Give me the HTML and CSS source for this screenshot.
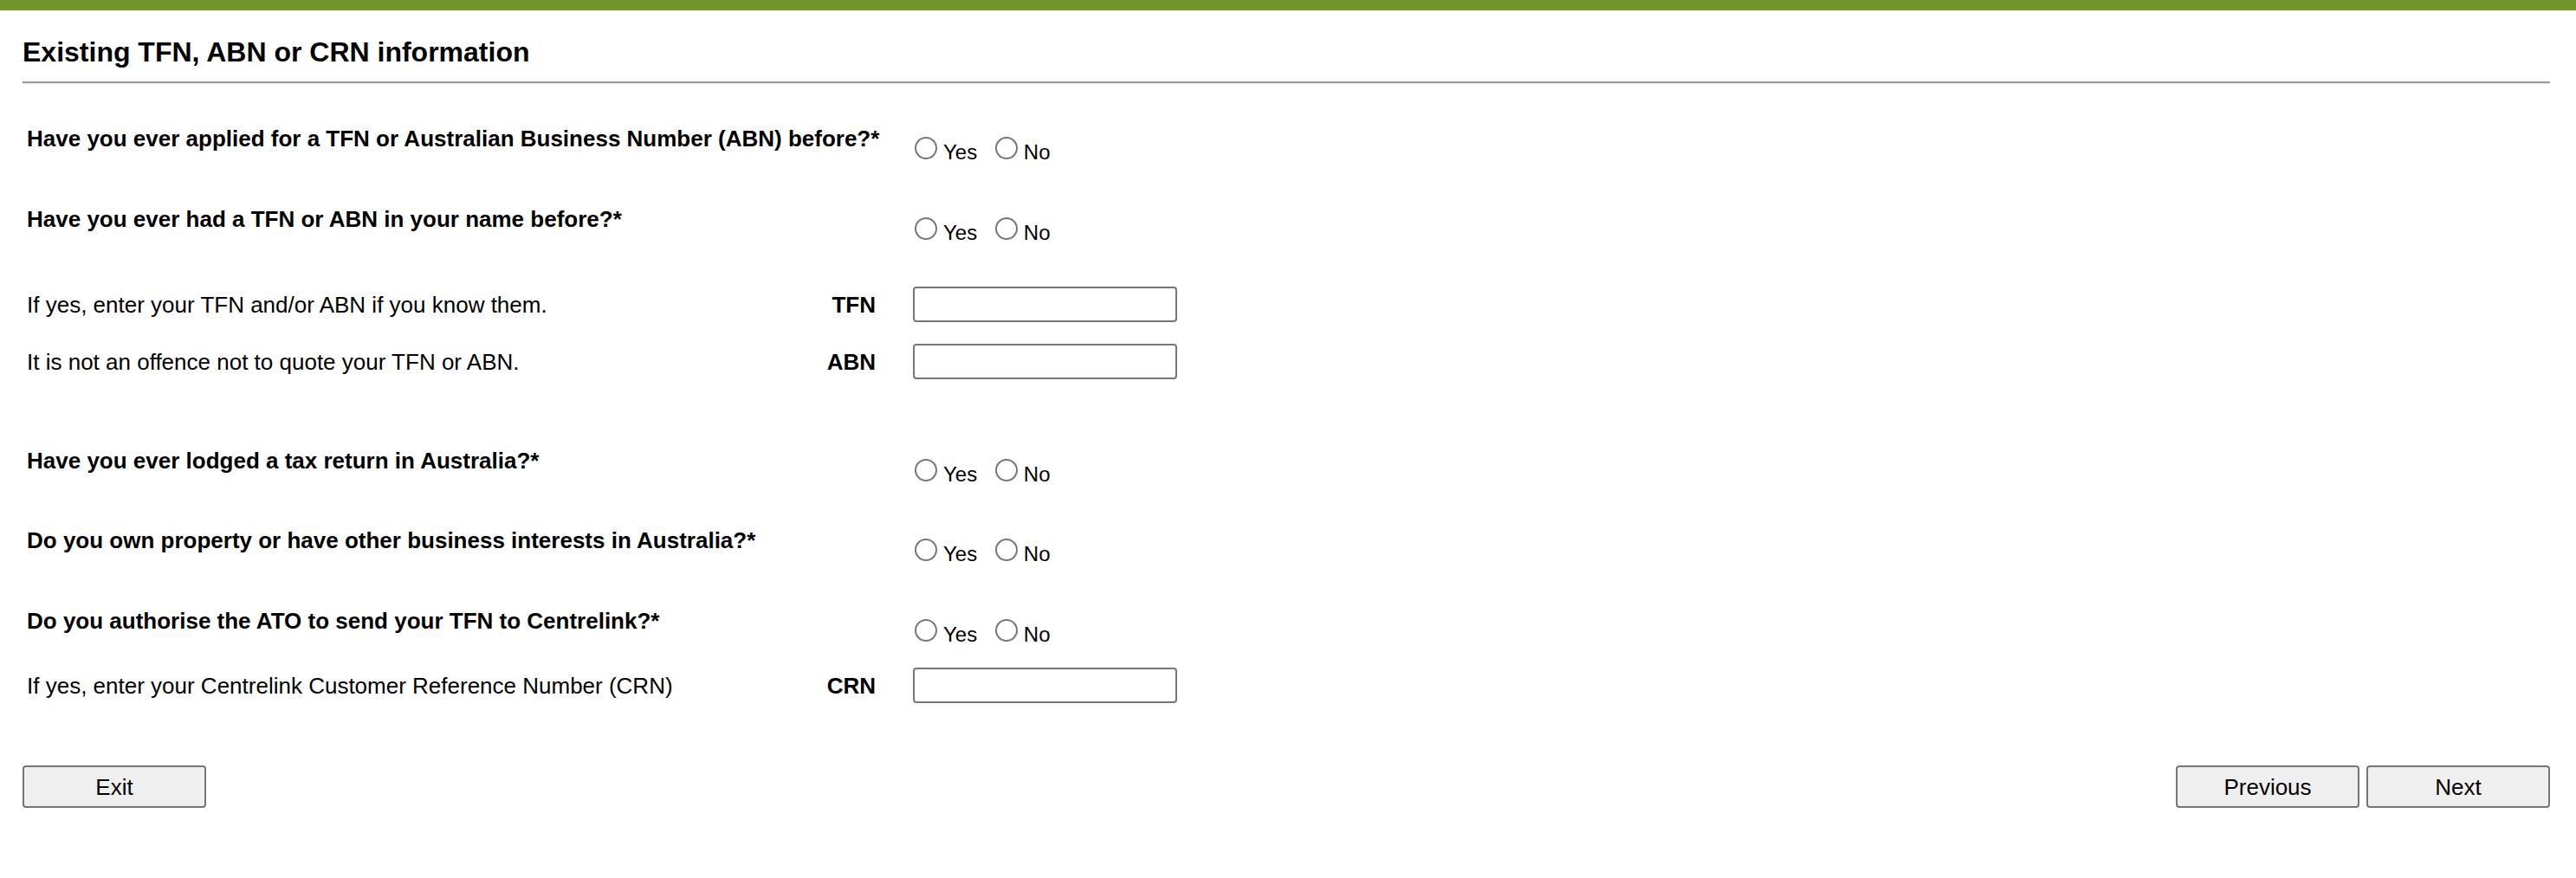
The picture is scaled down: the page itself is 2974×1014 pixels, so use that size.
FILE: index.html
```html
<!DOCTYPE html>
<html lang="en">
<head>
<meta charset="utf-8">
<title>Existing TFN, ABN or CRN information</title>
<link rel="stylesheet" href="styles.css">
</head>
<body>
<div class="topbar"></div>
<main class="page">
  <h1 class="title">Existing TFN, ABN or CRN information</h1>
  <hr class="rule">

  <form class="form">
    <div class="row q-row">
      <div class="q-label">Have you ever applied for a TFN or Australian Business Number (ABN) before?*</div>
      <div class="choices">
        <label class="opt"><input type="radio" name="q1" class="radio"><span>Yes</span></label>
        <label class="opt"><input type="radio" name="q1" class="radio"><span>No</span></label>
      </div>
    </div>

    <div class="row q-row">
      <div class="q-label">Have you ever had a TFN or ABN in your name before?*</div>
      <div class="choices">
        <label class="opt"><input type="radio" name="q2" class="radio"><span>Yes</span></label>
        <label class="opt"><input type="radio" name="q2" class="radio"><span>No</span></label>
      </div>
    </div>

    <div class="row input-row">
      <div class="hint">If yes, enter your TFN and/or ABN if you know them.</div>
      <div class="field-label">TFN</div>
      <input type="text" class="text-input">
    </div>

    <div class="row input-row">
      <div class="hint">It is not an offence not to quote your TFN or ABN.</div>
      <div class="field-label">ABN</div>
      <input type="text" class="text-input">
    </div>

    <div class="row q-row gap-before short">
      <div class="q-label">Have you ever lodged a tax return in Australia?*</div>
      <div class="choices">
        <label class="opt"><input type="radio" name="q3" class="radio"><span>Yes</span></label>
        <label class="opt"><input type="radio" name="q3" class="radio"><span>No</span></label>
      </div>
    </div>

    <div class="row q-row">
      <div class="q-label">Do you own property or have other business interests in Australia?*</div>
      <div class="choices">
        <label class="opt"><input type="radio" name="q4" class="radio"><span>Yes</span></label>
        <label class="opt"><input type="radio" name="q4" class="radio"><span>No</span></label>
      </div>
    </div>

    <div class="row q-row compact">
      <div class="q-label">Do you authorise the ATO to send your TFN to Centrelink?*</div>
      <div class="choices">
        <label class="opt"><input type="radio" name="q5" class="radio"><span>Yes</span></label>
        <label class="opt"><input type="radio" name="q5" class="radio"><span>No</span></label>
      </div>
    </div>

    <div class="row input-row">
      <div class="hint">If yes, enter your Centrelink Customer Reference Number (CRN)</div>
      <div class="field-label">CRN</div>
      <input type="text" class="text-input">
    </div>
  </form>

  <div class="actions">
    <button type="button" class="btn">Exit</button>
    <div class="nav">
      <button type="button" class="btn">Previous</button>
      <button type="button" class="btn">Next</button>
    </div>
  </div>
</main>
</body>
</html>
```

FILE: styles.css
```css
html, body {
  margin: 0;
  padding: 0;
  background: #ffffff;
}

body {
  font-family: "Liberation Sans", Arial, Helvetica, sans-serif;
  color: #000000;
}

.topbar {
  height: 12px;
  background: #70962d;
}

.page {
  padding: 0 30px 0 26px;
}

.title {
  margin: 30px 0 0 0;
  font-size: 32px;
  line-height: 37px;
  font-weight: bold;
}

.rule {
  margin: 15px 0 0 0;
  height: 0;
  border: 0;
  border-top: 2px solid #9a9a9a;
  border-bottom: 1px solid #e6e6e6;
}

.form {
  margin-top: 48px;
  padding-left: 5px;
}

.row {
  display: grid;
  grid-template-columns: 880px 143px 1fr;
}

.q-row {
  height: 93px;
  align-items: start;
}

.q-row.short {
  height: 92px;
}

.q-row.compact {
  height: 69px;
}

.gap-before {
  margin-top: 79px;
}

.q-label {
  grid-column: 1 / 3;
  font-size: 26px;
  line-height: 30px;
  font-weight: bold;
  white-space: nowrap;
}

.choices {
  grid-column: 3;
  margin-top: 13px;
  font-size: 24px;
  line-height: 26px;
  white-space: nowrap;
}

.opt {
  display: inline;
}

.opt + .opt {
  margin-left: 12px;
}

.radio {
  -webkit-appearance: none;
  appearance: none;
  display: inline-block;
  box-sizing: border-box;
  width: 26px;
  height: 26px;
  margin: 0 7px 0 2px;
  border: 2px solid #777777;
  border-radius: 50%;
  background: #ffffff;
  vertical-align: baseline;
}

.input-row {
  height: 41px;
  margin-bottom: 25px;
  align-items: center;
}

.hint {
  font-size: 26px;
  line-height: 30px;
  white-space: nowrap;
}

.field-label {
  font-size: 26px;
  line-height: 30px;
  font-weight: bold;
  text-align: right;
  padding-right: 43px;
}

.text-input {
  box-sizing: border-box;
  width: 305px;
  height: 41px;
  margin: 0;
  border: 2px solid #767676;
  border-radius: 4px;
  background: #ffffff;
  font-family: inherit;
  font-size: 26px;
}

.actions {
  display: flex;
  justify-content: space-between;
  margin-top: 72px;
}

.nav {
  display: flex;
  gap: 8px;
}

.btn {
  box-sizing: border-box;
  width: 212px;
  height: 49px;
  margin: 0;
  padding: 0;
  border: 2px solid #767676;
  border-radius: 4px;
  background: #efefef;
  color: #000000;
  font-family: "Liberation Sans", Arial, Helvetica, sans-serif;
  font-size: 26px;
  line-height: 30px;
  text-align: center;
}
```
